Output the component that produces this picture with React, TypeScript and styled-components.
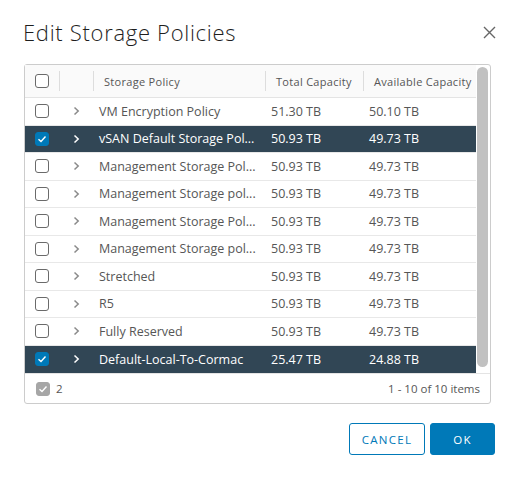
import React from 'react'
import styled, { createGlobalStyle } from 'styled-components'

const GlobalStyle = createGlobalStyle`
  html, body {
    margin: 0;
    padding: 0;
    background: #ffffff;
  }
  body {
    font-family: 'Open Sans', 'Liberation Sans', sans-serif;
    color: #565656;
  }
`

interface Policy {
  name: string
  total: string
  available: string
  selected?: boolean
}

const policies: Policy[] = [
  { name: 'VM Encryption Policy', total: '51.30 TB', available: '50.10 TB' },
  { name: 'vSAN Default Storage Pol...', total: '50.93 TB', available: '49.73 TB', selected: true },
  { name: 'Management Storage Pol...', total: '50.93 TB', available: '49.73 TB' },
  { name: 'Management Storage pol...', total: '50.93 TB', available: '49.73 TB' },
  { name: 'Management Storage Pol...', total: '50.93 TB', available: '49.73 TB' },
  { name: 'Management Storage pol...', total: '50.93 TB', available: '49.73 TB' },
  { name: 'Stretched', total: '50.93 TB', available: '49.73 TB' },
  { name: 'R5', total: '50.93 TB', available: '49.73 TB' },
  { name: 'Fully Reserved', total: '50.93 TB', available: '49.73 TB' },
  { name: 'Default-Local-To-Cormac', total: '25.47 TB', available: '24.88 TB', selected: true }
]

const COLUMNS = '34px 34px 172px 98px 113px'

const Modal = styled.div`
  width: 516px;
  height: 479px;
  box-sizing: border-box;
  padding: 17px 21px 0 24px;
  display: flex;
  flex-direction: column;
`

const Header = styled.div`
  display: flex;
  align-items: center;
  justify-content: space-between;
  height: 30px;
  margin-bottom: 17px;
`

const Title = styled.h1`
  margin: 0 0 0 -1px;
  font-size: 22px;
  font-weight: 300;
  color: #1e1e1e;
  letter-spacing: 0.7px;
`

const CloseButton = styled.button`
  width: 20px;
  height: 20px;
  padding: 0;
  border: 0;
  background: none;
  display: flex;
  align-items: center;
  justify-content: center;
  margin-right: -4px;
`

const Datagrid = styled.div`
  width: 467px;
  box-sizing: border-box;
  border: 1px solid #cccccc;
  border-radius: 3px;
  display: flex;
  flex-direction: column;
`

const Body = styled.div`
  display: flex;
`

const Table = styled.div`
  flex: 1;
  display: flex;
  flex-direction: column;
`

const HeaderRow = styled.div`
  display: grid;
  grid-template-columns: ${COLUMNS};
  height: 32px;
  border-bottom: 1px solid #e4e4e4;
  background: #fafafa;
`

const HeaderCell = styled.div<{ $divider?: boolean; $center?: boolean }>`
  position: relative;
  display: flex;
  align-items: center;
  justify-content: ${({ $center }) => ($center ? 'center' : 'flex-start')};
  padding-left: ${({ $center }) => ($center ? '0' : '11px')};
  font-size: 11px;
  letter-spacing: 0.3px;
  color: #565656;
  white-space: nowrap;
  overflow: hidden;
  ${({ $divider }) =>
    $divider &&
    `
    &::before {
      content: '';
      position: absolute;
      left: 0;
      top: 6px;
      bottom: 6px;
      width: 1px;
      background: #dddddd;
    }
  `}
`

const Row = styled.div<{ $selected?: boolean }>`
  display: grid;
  grid-template-columns: ${COLUMNS};
  height: 27.5px;
  box-sizing: border-box;
  border-bottom: 1px solid #e8e8e8;
  background: ${({ $selected }) => ($selected ? '#314655' : '#ffffff')};
  color: ${({ $selected }) => ($selected ? '#ffffff' : '#565656')};
  &:last-child {
    border-bottom: 0;
  }
`

const Cell = styled.div<{ $center?: boolean }>`
  display: flex;
  align-items: center;
  justify-content: ${({ $center }) => ($center ? 'center' : 'flex-start')};
  padding-left: ${({ $center }) => ($center ? '0' : '6px')};
  font-size: 12.5px;
  white-space: nowrap;
  overflow: hidden;
`

const Box = styled.span<{ $checked?: boolean; $muted?: boolean }>`
  width: 14px;
  height: 14px;
  box-sizing: border-box;
  border-radius: 3px;
  display: inline-flex;
  align-items: center;
  justify-content: center;
  border: 1px solid
    ${({ $checked, $muted }) => ($muted ? '#a6a6a6' : $checked ? '#0079b8' : '#6a6a6a')};
  background: ${({ $checked, $muted }) => ($muted ? '#a6a6a6' : $checked ? '#0079b8' : '#ffffff')};
`

const ScrollTrack = styled.div`
  width: 14px;
  padding: 2px 2px 6px 1px;
  box-sizing: border-box;
  display: flex;
`

const ScrollThumb = styled.div`
  flex: 1;
  border-radius: 6px;
  background: #c1c1c1;
`

const Footer = styled.div`
  height: 29px;
  border-top: 1px solid #e4e4e4;
  display: flex;
  align-items: center;
  justify-content: space-between;
  padding: 0 10px 0 11px;
  font-size: 11.5px;
  color: #565656;
`

const Selection = styled.div`
  display: flex;
  align-items: center;
  gap: 6px;
`

const Actions = styled.div`
  display: flex;
  justify-content: flex-end;
  gap: 5px;
  margin-top: 19px;
`

const Button = styled.button<{ $primary?: boolean }>`
  height: 32px;
  padding: 0;
  width: ${({ $primary }) => ($primary ? '65px' : '76px')};
  border-radius: 3px;
  border: 1px solid #0079b8;
  background: ${({ $primary }) => ($primary ? '#0079b8' : '#ffffff')};
  color: ${({ $primary }) => ($primary ? '#ffffff' : '#0079b8')};
  font-family: 'Open Sans', 'Liberation Sans', sans-serif;
  font-size: 11.5px;
  letter-spacing: 1.3px;
  text-transform: uppercase;
`

const Check = ({ color = '#ffffff' }: { color?: string }) => (
  <svg width="10" height="8" viewBox="0 0 10 8">
    <path d="M1.5 4.2 L4 6.5 L8.5 1.5" fill="none" stroke={color} strokeWidth="1.4" />
  </svg>
)

const Chevron = ({ color }: { color: string }) => (
  <svg width="7" height="10" viewBox="0 0 7 10">
    <path d="M1.5 1.5 L5.2 5 L1.5 8.5" fill="none" stroke={color} strokeWidth="1.5" />
  </svg>
)

const App: React.FC = () => {
  return (
    <>
      <GlobalStyle />
      <Modal>
        <Header>
          <Title>Edit Storage Policies</Title>
          <CloseButton aria-label="Close">
            <svg width="13" height="13" viewBox="0 0 13 13">
              <path d="M1 1 L12 12 M12 1 L1 12" stroke="#666666" strokeWidth="1.4" />
            </svg>
          </CloseButton>
        </Header>
        <Datagrid>
          <Body>
            <Table>
              <HeaderRow>
                <HeaderCell $center>
                  <Box />
                </HeaderCell>
                <HeaderCell $divider />
                <HeaderCell $divider>Storage Policy</HeaderCell>
                <HeaderCell $divider>Total Capacity</HeaderCell>
                <HeaderCell $divider>Available Capacity</HeaderCell>
              </HeaderRow>
              {policies.map((p, i) => (
                <Row key={i} $selected={p.selected}>
                  <Cell $center>
                    <Box $checked={p.selected}>{p.selected && <Check />}</Box>
                  </Cell>
                  <Cell $center>
                    <Chevron color={p.selected ? '#ffffff' : '#8a8a8a'} />
                  </Cell>
                  <Cell>{p.name}</Cell>
                  <Cell>{p.total}</Cell>
                  <Cell>{p.available}</Cell>
                </Row>
              ))}
            </Table>
            <ScrollTrack>
              <ScrollThumb />
            </ScrollTrack>
          </Body>
          <Footer>
            <Selection>
              <Box $muted>
                <Check />
              </Box>
              2
            </Selection>
            <span>1 - 10 of 10 items</span>
          </Footer>
        </Datagrid>
        <Actions>
          <Button>Cancel</Button>
          <Button $primary>OK</Button>
        </Actions>
      </Modal>
    </>
  )
}

export default App
